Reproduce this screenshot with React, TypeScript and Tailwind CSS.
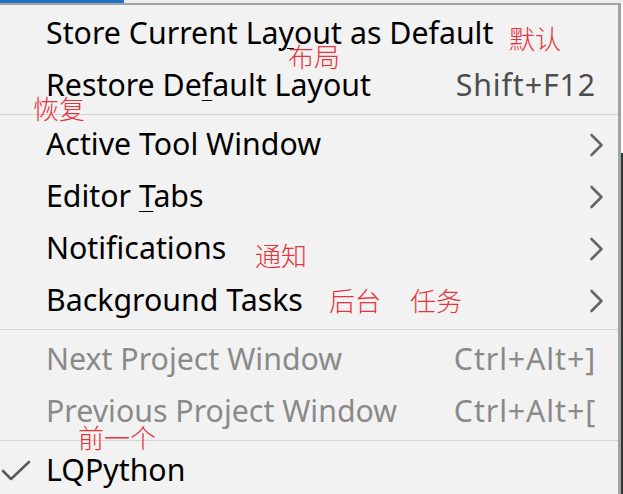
import React from "react";

const FONT = { fontFamily: '"Noto Sans", "Open Sans", sans-serif' };
const CJK = { fontFamily: '"Noto Sans CJK SC", "Noto Sans", sans-serif' };

function Chevron() {
  return (
    <svg width="15" height="24" viewBox="0 0 15 24" className="block">
      <path d="M2.5 2 L12.5 12 L2.5 22" fill="none" stroke="#666666" strokeWidth="2.6" strokeLinecap="round" strokeLinejoin="round" />
    </svg>
  );
}

function Check() {
  return (
    <svg width="30" height="24" viewBox="0 0 30 24" className="block">
      <path d="M2 12 L10 20 L28 3" fill="none" stroke="#5a5a5a" strokeWidth="2.6" strokeLinecap="round" strokeLinejoin="round" />
    </svg>
  );
}

function Row({
  children,
  right,
  sub,
  disabled,
  checked,
}: {
  children: React.ReactNode;
  right?: string;
  sub?: boolean;
  disabled?: boolean;
  checked?: boolean;
}) {
  return (
    <div className="flex h-[52px] items-center pt-[1px]">
      <div className="flex w-[46px] shrink-0 items-center pl-[1px]">{checked ? <Check /> : null}</div>
      <div className={`flex-1 text-[30.3px] leading-none ${disabled ? "text-[#8a8a8a]" : "text-black"}`}>{children}</div>
      {right ? (
        <div className={`pr-[22px] text-[30.3px] leading-none tracking-[0.9px] ${disabled ? "text-[#8a8a8a]" : "text-[#4d4d4d]"}`}>{right}</div>
      ) : null}
      {sub ? (
        <div className="pr-[14px]">
          <Chevron />
        </div>
      ) : null}
    </div>
  );
}

function Sep() {
  return (
    <div className="flex h-[7px] items-center">
      <div className="h-px w-full bg-[#d2d2d2]" />
    </div>
  );
}

function Note({ text, className }: { text: string; className: string }) {
  return (
    <div className={`absolute text-[26px] font-light leading-none text-[#e8323c] ${className}`} style={CJK}>
      {text}
    </div>
  );
}

export default function App() {
  return (
    <div className="relative flex h-[494px] w-[623px] flex-col overflow-hidden bg-[#f2f2f2]" style={FONT}>
      <div className="flex h-[3px] shrink-0">
        <div className="h-full w-[124px] bg-[#1f74c8]" />
        <div className="h-full flex-1 bg-[#ececec]" />
      </div>
      <div className="flex flex-1">
        <div className="flex w-[621px] flex-col border-r-[3px] border-t-2 border-[#a3a3a3] bg-[#f2f2f2] pt-[2px]">
          <Row>
            Store Current La<span className="underline decoration-1 underline-offset-[4px]">y</span>out as Default
          </Row>
          <Row right="Shift+F12">
            Restore De<span className="underline decoration-1 underline-offset-[4px]">f</span>ault Layout
          </Row>
          <Sep />
          <Row sub>Active Tool Window</Row>
          <Row sub>
            Editor <span className="underline decoration-1 underline-offset-[4px]">T</span>abs
          </Row>
          <Row sub>Notifications</Row>
          <Row sub>Background Tasks</Row>
          <Sep />
          <Row right="Ctrl+Alt+]" disabled>
            Next Project Window
          </Row>
          <Row right="Ctrl+Alt+[" disabled>
            Previous Project Window
          </Row>
          <Sep />
          <Row checked>LQPython</Row>
        </div>
        <div className="flex w-[2px] flex-col">
          <div className="h-[150px] bg-[#f8f8f8]" />
          <div className="flex-1 bg-[#2f3a33]" />
        </div>
      </div>

      <Note text="默认" className="left-[509px] top-[25px]" />
      <Note text="布局" className="left-[288px] top-[43px]" />
      <Note text="恢复" className="left-[33px] top-[95px]" />
      <Note text="通知" className="left-[255px] top-[242px]" />
      <Note text="后台" className="left-[329px] top-[287px]" />
      <Note text="任务" className="left-[410px] top-[287px]" />
      <Note text="前一个" className="left-[78px] top-[424px]" />
    </div>
  );
}
